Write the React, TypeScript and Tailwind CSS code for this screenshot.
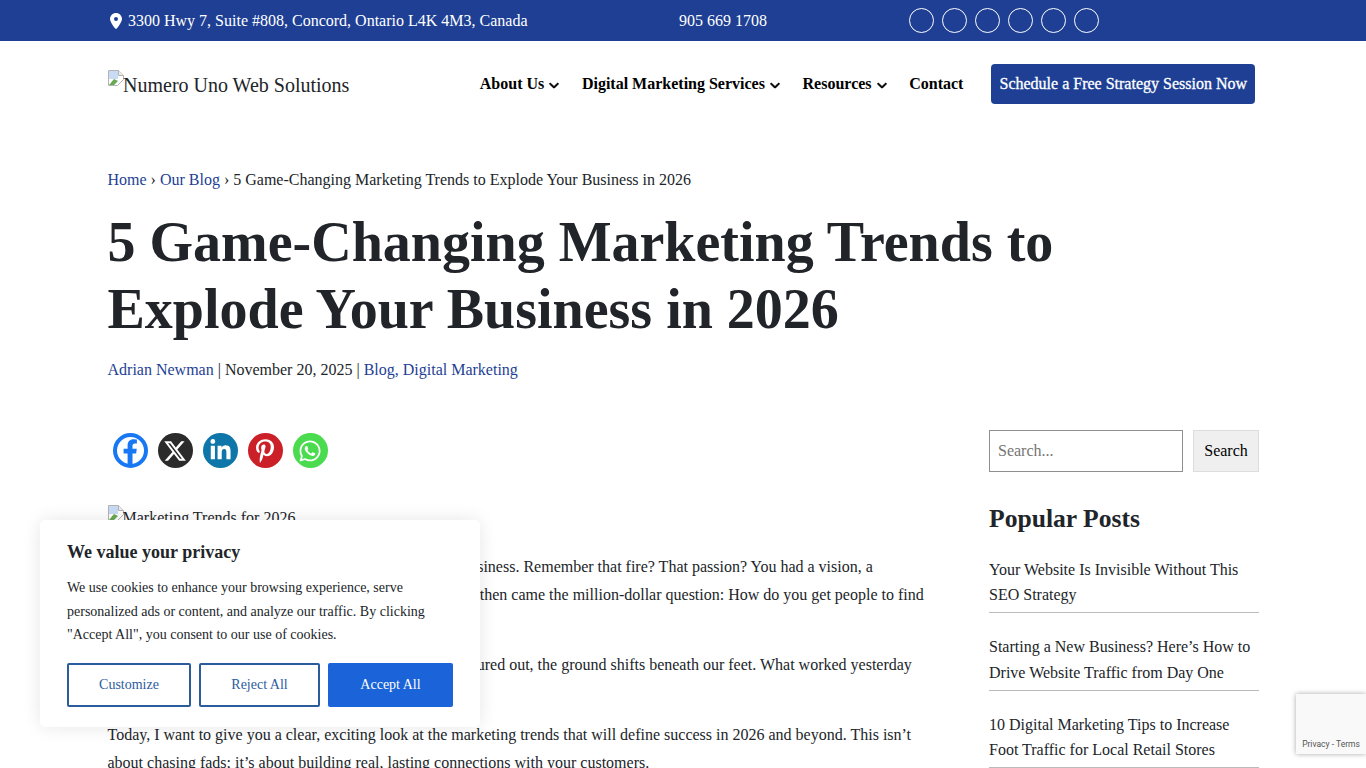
import { FaChevronDown, FaLinkedinIn, FaLocationDot, FaPinterestP, FaWhatsapp, FaXTwitter } from 'react-icons/fa6';

const navy = 'text-[#1e3f94]';

function BrokenImage({ alt, className }: { alt: string; className: string }) {
    return (
        <span className={`flex items-start ${className}`}>
            <svg width="16" height="16" viewBox="0 0 16 16" className="shrink-0">
                <path d="M.5 .5h10l5 5v4l-6 6H.5z" fill="#fff" stroke="#b4b4b4" />
                <path d="M10.5 .5v5h5" fill="#ececec" stroke="#b4b4b4" />
                <path d="M1 1h9v8H1z" fill="#c8daf4" />
                <path d="M1 15l5-6 4 2-4 4z" fill="#68a952" />
            </svg>
            <span className="ml-[-1px]">{alt}</span>
        </span>
    );
}

function NavItem({ label, caret = true }: { label: string; caret?: boolean }) {
    return (
        <a className="flex items-center gap-[5px] font-bold text-black">
            {label}
            {caret && <FaChevronDown size={10} stroke="currentColor" strokeWidth={50} className="mt-[2px]" />}
        </a>
    );
}

const popular = [
    ['Your Website Is Invisible Without This', 'SEO Strategy'],
    ['Starting a New Business? Here’s How to', 'Drive Website Traffic from Day One'],
    ['10 Digital Marketing Tips to Increase', 'Foot Traffic for Local Retail Stores'],
];

export default function App() {
    return (
        <div className="relative h-screen overflow-hidden bg-white font-['Liberation_Serif',serif] text-base text-[#212529]">
            <div className="flex h-[41px] items-center bg-[#1e3f94] pl-[108px] text-white">
                <div className="flex w-[571px] items-center gap-[4px]">
                    <FaLocationDot size={16} />
                    <span>3300 Hwy 7, Suite #808, Concord, Ontario L4K 4M3, Canada</span>
                </div>
                <span className="w-[230px]">905 669 1708</span>
                <div className="flex gap-[8px]">
                    {[0, 1, 2, 3, 4, 5].map((i) => (
                        <span key={i} className="h-[25px] w-[25px] rounded-full border border-white" />
                    ))}
                </div>
            </div>

            <header className="flex h-[86px] items-center pl-[108px] pr-[111px]">
                <BrokenImage alt="Numero Uno Web Solutions" className="mt-[2px] text-[20px] leading-[30px]" />
                <nav className="ml-auto flex items-center gap-[22.6px]">
                    <NavItem label="About Us" />
                    <NavItem label="Digital Marketing Services" />
                    <NavItem label="Resources" />
                    <NavItem label="Contact" caret={false} />
                    <a className="ml-[5.5px] flex h-[40px] items-center rounded-[4px] bg-[#1e3f94] px-[8px] text-white [-webkit-text-stroke:0.3px_white]">
                        Schedule a Free Strategy Session Now
                    </a>
                </nav>
            </header>

            <main className="pl-[107.5px] pr-[107px] pt-[41px]">
                <div className="leading-[24px]">
                    <a className={navy}>Home</a> › <a className={navy}>Our Blog</a> › 5 Game-Changing Marketing Trends to Explode Your Business in 2026
                </div>
                <h1 className="mt-[17px] text-[56px] font-bold leading-[67px]">
                    5 Game-Changing Marketing Trends to
                    <br />
                    Explode Your Business in 2026
                </h1>
                <div className="mt-[15px] leading-[24px]">
                    <a className={navy}>Adrian Newman</a> | November 20, 2025 | <a className={navy}>Blog, Digital Marketing</a>
                </div>

                <div className="mt-[48px] flex">
                    <div className="w-[820px] shrink-0">
                        <div className="flex gap-[10px] pl-[5px] pt-[3px]">
                            <svg width="35" height="35" viewBox="0 0 35 35">
                                <circle cx="17.5" cy="17.5" r="15.5" fill="#fff" stroke="#1877f2" strokeWidth="4" />
                                <path d="M14.6 32v-11.6h-4v-4.6h4v-3.4c0-4 2.4-6.2 6-6.2 1.7 0 3.3.3 3.3.3v3.9h-1.9c-1.9 0-2.5 1.2-2.5 2.4v3h4.3l-.7 4.6h-3.6V32z" fill="#1877f2" />
                            </svg>
                            <span className="flex h-[35px] w-[35px] items-center justify-center rounded-full bg-[#2b2b2b] text-white">
                                <FaXTwitter size={24} />
                            </span>
                            <span className="flex h-[35px] w-[35px] items-center justify-center rounded-full bg-[#0e76a8] text-white">
                                <FaLinkedinIn size={23} />
                            </span>
                            <span className="flex h-[35px] w-[35px] items-center justify-center rounded-full bg-[#cb2027] text-white">
                                <FaPinterestP size={24} />
                            </span>
                            <span className="flex h-[35px] w-[35px] items-center justify-center rounded-full bg-[#4bdb4f] text-white">
                                <FaWhatsapp size={24} />
                            </span>
                        </div>
                        <BrokenImage alt="Marketing Trends for 2026" className="mt-[37px] leading-[26px]" />
                        <p className="mt-[22px] leading-[28px]">
                            Let’s take you all back to the day you first started your business. Remember that fire? That passion? You had a vision, a
                            <br />
                            product, or a service you knew people really needed. And then came the million-dollar question: How do you get people to find
                            <br />
                            you?
                        </p>
                        <p className="mt-[14px] leading-[28px]">
                            Just when we think we finally have modern marketing figured out, the ground shifts beneath our feet. What worked yesterday
                            <br />
                            might not work at all tomorrow.
                        </p>
                        <p className="mt-[14px] leading-[28px]">
                            Today, I want to give you a clear, exciting look at the marketing trends that will define success in 2026 and beyond. This isn’t
                            <br />
                            about chasing fads; it’s about building real, lasting connections with your customers.
                        </p>
                    </div>

                    <aside className="ml-[61.5px] w-[270px] shrink-0">
                        <div className="flex gap-[10px]">
                            <div className="flex h-[42px] w-[194px] items-center border border-[#8f8f8f] px-[8px] text-[#757575]">Search...</div>
                            <div className="flex h-[42px] w-[66px] items-center justify-center border border-[#ddd] bg-[#efefef] text-black">Search</div>
                        </div>
                        <h2 className="mt-[29px] text-[25.6px] font-bold leading-[36px]">Popular Posts</h2>
                        <ul className="mt-[19.5px]">
                            {popular.map(([a, b]) => (
                                <li key={a} className="mb-[21px] border-b border-[#bbb] pb-[4.5px] leading-[25.5px]">
                                    {a}
                                    <br />
                                    {b}
                                </li>
                            ))}
                        </ul>
                    </aside>
                </div>
            </main>

            <div className="absolute left-[40px] top-[520px] h-[207px] w-[440px] rounded-[5px] bg-white px-[27px] pt-[19px] shadow-[0_0_18px_rgba(0,0,0,0.1)]">
                <div className="text-[18px] font-bold leading-[26px]">We value your privacy</div>
                <p className="mt-[11px] text-[14px] leading-[23.5px]">
                    We use cookies to enhance your browsing experience, serve
                    <br />
                    personalized ads or content, and analyze our traffic. By clicking
                    <br />
                    "Accept All", you consent to our use of cookies.
                </p>
                <div className="mt-[16px] flex gap-[8px] text-[14px]">
                    <span className="flex h-[44px] w-[124px] items-center justify-center rounded-[2px] border-2 border-[#2b5c9e] text-[#2b5c9e]">Customize</span>
                    <span className="flex h-[44px] w-[121px] items-center justify-center rounded-[2px] border-2 border-[#2b5c9e] text-[#2b5c9e]">Reject All</span>
                    <span className="flex h-[44px] w-[125px] items-center justify-center rounded-[2px] bg-[#1a63d8] text-white">Accept All</span>
                </div>
            </div>

            <div className="absolute left-[1296px] top-[694px] flex h-[60px] w-[70px] items-end justify-center bg-[#f9f9f9] pb-[3px] font-['Roboto',sans-serif] text-[8.5px] leading-[14px] text-[#555] shadow-[0_0_5px_rgba(0,0,0,0.35)]">
                Privacy - Terms
            </div>
        </div>
    );
}
